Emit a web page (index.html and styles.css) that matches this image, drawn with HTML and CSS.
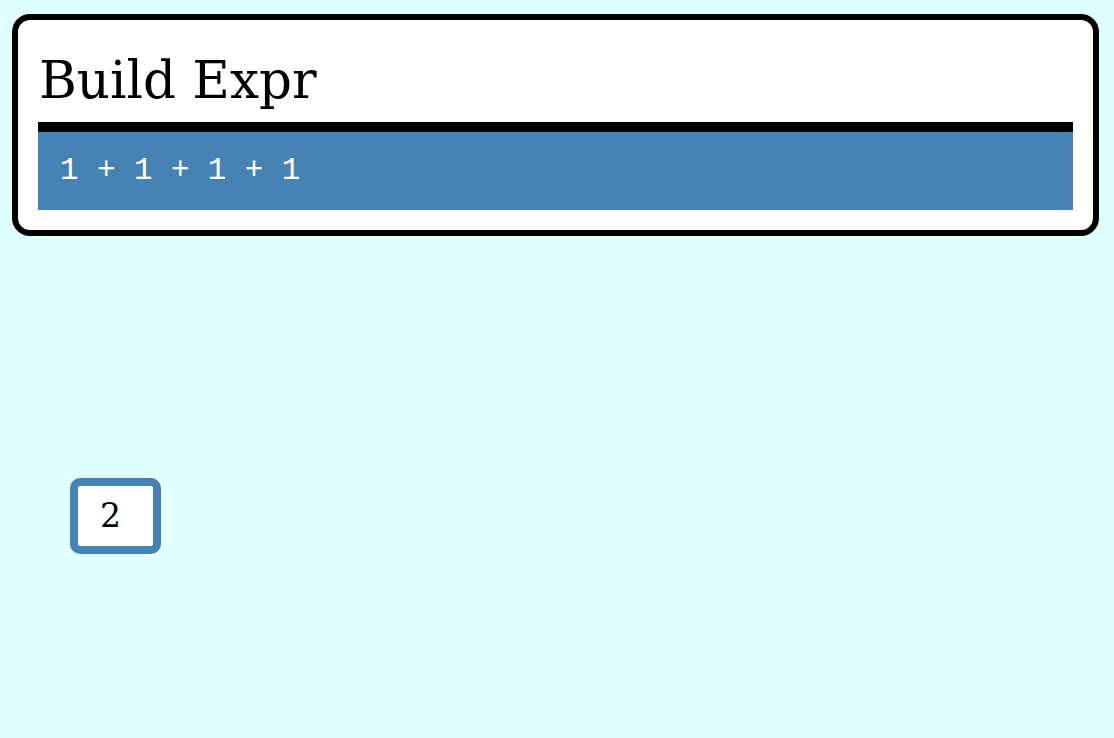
FILE: index.html
```html
<!DOCTYPE html>
<html>
<head>
<meta charset="utf-8">
<link rel="stylesheet" href="styles.css">
</head>
<body>
<div class="card">
  <h1 class="title">Build Expr</h1>
  <div class="expr">1 + 1 + 1 + 1</div>
</div>
<div class="result">2</div>
</body>
</html>
```
FILE: styles.css
```css
html, body {
  margin: 0;
  padding: 0;
  background: #e0ffff;
}
body {
  font-family: "DejaVu Serif", serif;
}
.card {
  margin: 14px 15px 0 12px;
  border: 6px solid #000;
  border-radius: 18px;
  background: #fff;
  padding: 0 20px 20px;
}
.title {
  margin: 0;
  padding: 30px 0 12px 1px;
  font-family: "DejaVu Serif", serif;
  font-weight: normal;
  font-size: 51.5px;
  line-height: 60px;
  color: #000;
}
.expr {
  border-top: 10px solid #000;
  background: #4682b4;
  color: #fff;
  font-family: "Liberation Mono", monospace;
  font-size: 30.8px;
  line-height: 36px;
  padding: 21px 22px 21px;
  white-space: pre;
}
.result {
  display: block;
  box-sizing: content-box;
  width: 53px;
  height: 60px;
  margin: 242px 0 0 70px;
  border: 8px solid #4682b4;
  border-radius: 10px;
  background: #fff;
  padding: 0 0 0 22px;
  font-family: "DejaVu Serif", serif;
  font-size: 33px;
  line-height: 60px;
  color: #000;
}
```
